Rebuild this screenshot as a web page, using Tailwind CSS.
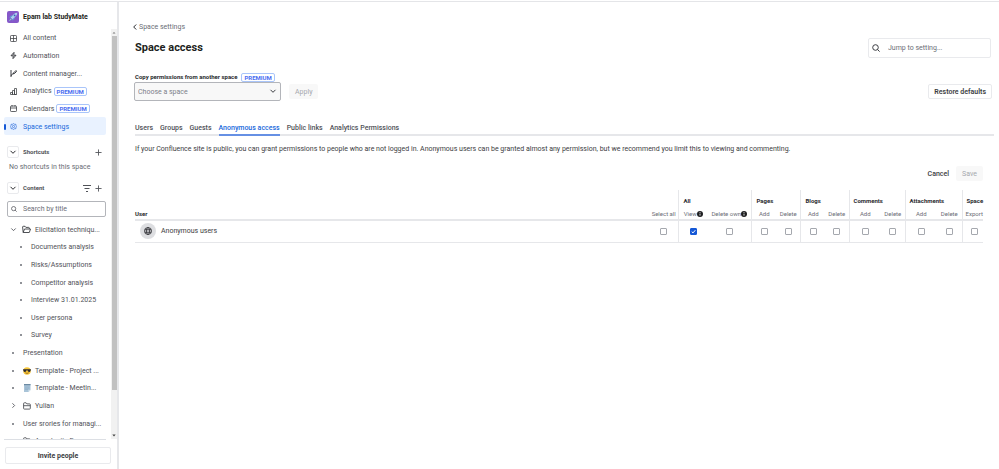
<!DOCTYPE html>
<html lang="en">
<head>
<meta charset="utf-8">
<meta name="viewport" content="width=device-width, initial-scale=1">
<title>Space access</title>
<script src="https://cdn.jsdelivr.net/npm/@tailwindcss/browser@4"></script>
</head>
<body class="flex h-screen flex-col overflow-hidden bg-white font-[Roboto,'Open_Sans',sans-serif] text-[7px] leading-[10px] text-[#505258]">
<svg class="hidden" aria-hidden="true">
  <symbol id="down" viewBox="0 0 8 8"><path d="M1.5 2.8 4 5.3l2.5-2.5" fill="none" stroke="currentColor" stroke-width="1"/></symbol>
  <symbol id="right" viewBox="0 0 8 8"><path d="M2.8 1.5 5.3 4 2.8 6.5" fill="none" stroke="currentColor" stroke-width="1"/></symbol>
  <symbol id="plus" viewBox="0 0 8 8"><path d="M4 .5v7M.5 4h7" fill="none" stroke="currentColor" stroke-width="1"/></symbol>
  <symbol id="lens" viewBox="0 0 8 8"><circle cx="3.5" cy="3.5" r="2.8" fill="none" stroke="currentColor"/><path d="m5.4 5.4 2.2 2.2" stroke="currentColor"/></symbol>
  <symbol id="folder" viewBox="0 0 8 8"><path d="M.6 6.3V1.5q0-.7.7-.7h1.800l.8 1.100h2.700q.7 0 .7.7v3.700q0 .8-.7.8H1.300q-.7 0-.7-.8ZM.6 3.700h6.700" fill="none" stroke="currentColor" stroke-width=".9"/></symbol>
  <symbol id="info" viewBox="0 0 8 8"><circle cx="4" cy="4" r="4" fill="#1e1f21"/><path d="M4 3.500v2.700M4 1.500v1.200" stroke="#fff" stroke-width="1.100"/></symbol>
</svg>
<div class="h-px shrink-0"></div>
<div class="h-px shrink-0 bg-[#e4e5e8]"></div>
<div class="flex min-h-0 flex-1">
  <aside class="flex w-[119px] shrink-0 flex-col border-r-2 border-[#e6e7ea]">
    <header class="flex h-[27px] shrink-0 items-center gap-1 pt-[2px] pl-[7px]">
      <svg class="size-3" viewBox="0 0 12 12"><rect width="12" height="12" rx="2" fill="#8558c9"/><path d="M3.600 6.400 7 3q1.400-1.300 3.300-1.300Q10.200 3.700 9 5L5.600 8.400Z" fill="#a9d3ee"/><path d="M3.600 6.400 2.200 6.600 4.600 4.500l1 .1ZM5.600 8.400l-.2 1.400L7.500 7.400l-.1-1Z" fill="#4fb6d6"/><circle cx="7.600" cy="4.400" r=".9" fill="#3b5fb5"/><path d="M3.600 7.400 1.800 10.200l2.800-1.800Z" fill="#7ee0c3"/></svg>
      <span class="text-[7px] font-bold text-[#1e1f21] whitespace-nowrap">Epam lab StudyMate</span>
    </header>
    <div class="flex min-h-0 flex-1">
      <div class="flex min-w-0 flex-1 flex-col overflow-hidden pr-[5px] pl-1">
        <nav class="grid h-[106px] shrink-0 auto-rows-fr" aria-label="Space">
          <a href="#" class="flex items-center gap-[6px] pt-px pl-[6px]"><svg class="size-[7px]" viewBox="0 0 14 14" fill="none" stroke="#3b3d42" stroke-width="1.500"><rect x="1" y="1" width="12" height="12" rx="1.500"/><path d="M7 1v12M1 7h12"/></svg>All content</a>
          <a href="#" class="flex items-center gap-[6px] pt-px pl-[6px]"><svg class="size-[7px]" viewBox="0 0 14 14" fill="none" stroke="#3b3d42" stroke-width="2"><path d="M8 .8 2 7.500h4.500L6 13.200l6-6.700H7.500Z"/></svg>Automation</a>
          <a href="#" class="flex items-center gap-[6px] pt-px pl-[6px]"><svg class="size-[7px]" viewBox="0 0 14 14" fill="none" stroke="#3b3d42" stroke-width="2"><path d="M2 0v14M2 12q2-5 6-6M7 8l1-3 4-4 1.500 1.500-4 4Z"/></svg>Content manager...</a>
          <a href="#" class="flex items-center gap-[6px] pt-px pl-[6px]"><svg class="size-[7px]" viewBox="0 0 14 14" fill="none" stroke="#3b3d42" stroke-width="1.500"><path d="M1 13V9h4v4M5 13V5h4v8M9 13V1h4v12ZM1 13h12"/></svg><span>Analytics</span><span class="-ml-1 rounded-[2px] border border-[#a9c5fa] px-[2px] text-[6px] leading-[7px] font-bold text-[#4a6df0]">PREMIUM</span></a>
          <a href="#" class="flex items-center gap-[6px] pt-px pl-[6px]"><svg class="size-[7px]" viewBox="0 0 14 14" fill="none" stroke="#3b3d42" stroke-width="1.600"><rect x="1" y="2" width="12" height="11" rx="1.500"/><path d="M1 6h12M4 0v3M10 0v3"/></svg><span>Calendars</span><span class="-ml-1 rounded-[2px] border border-[#a9c5fa] px-[2px] text-[6px] leading-[7px] font-bold text-[#4a6df0]">PREMIUM</span></a>
          <a href="#" aria-current="page" class="relative flex items-center gap-[6px] rounded-[2px] bg-[#e9f2ff] pt-px pl-[6px] text-[#1868db]"><span class="absolute left-0 h-[6px] w-[2px] rounded-[1px] bg-[#1558d6]"></span><svg class="size-[7px]" viewBox="0 0 14 14" fill="none" stroke="#2f6fdc" stroke-width="1.500"><path d="m7 .8 2 1.700 2.700.1.400 2.600 1.300 1.800-1.300 1.800-.4 2.600-2.700.1-2 1.700-2-1.700-2.700-.1-.4-2.600L.6 7l1.300-1.800.4-2.600L5 2.500Z"/><circle cx="7" cy="7" r="2.200"/></svg>Space settings</a>
        </nav>
        <div class="mt-[11px] flex h-3 shrink-0 items-center pl-[3px]">
          <button aria-label="Collapse shortcuts" class="grid size-3 place-items-center rounded-[2px] border border-[#e9eaed] text-[#292a2e]"><svg class="size-2"><use href="#down"/></svg></button>
          <h2 class="ml-1 flex-1 text-[6px] font-bold">Shortcuts</h2>
          <button aria-label="Add shortcut" class="mr-1"><svg class="size-[7px]"><use href="#plus"/></svg></button>
        </div>
        <p class="mt-1 shrink-0 pl-[5px] text-[#6b6e76]">No shortcuts in this space</p>
        <div class="mt-[10px] flex h-3 shrink-0 items-center pl-[3px]">
          <button aria-label="Collapse content" class="grid size-3 place-items-center rounded-[2px] border border-[#e9eaed] text-[#292a2e]"><svg class="size-2"><use href="#down"/></svg></button>
          <h2 class="ml-1 flex-1 text-[6px] font-bold">Content</h2>
          <button aria-label="Filter" class="mr-1"><svg class="h-[7px] w-2" viewBox="0 0 8 7" stroke="currentColor"><path d="M0 .5h8M1.500 3.500h5M3 6.500h2"/></svg></button>
          <button aria-label="Add content" class="mr-1"><svg class="size-[7px]"><use href="#plus"/></svg></button>
        </div>
        <label class="mt-[7px] ml-[3px] flex h-4 shrink-0 items-center gap-[5px] rounded-[2px] border border-[#b3b5ba] pl-[3px]"><svg class="size-[6px] shrink-0"><use href="#lens"/></svg><input aria-label="Search by title" placeholder="Search by title" class="w-full min-w-0 pl-px placeholder:text-[#6b6e76]"></label>
        <ul class="mt-1 grid h-[229px] shrink-0 auto-rows-fr whitespace-nowrap">
          <li class="flex items-center gap-[5px] pl-[6px]"><svg class="size-[7px]"><use href="#down"/></svg><svg class="-mr-px size-[9px]" viewBox="0 0 9 8" fill="none" stroke="#3b3d42" stroke-width=".9"><path d="M1.200 7 .6 1.500q0-.7.7-.7h1.800l.8 1.100h2.700q.7 0 .7.7v.9M1.200 7l1.300-3.500h6L7.300 7Z"/></svg><a href="#">Elicitation techniqu...</a></li>
          <li class="flex items-center gap-2 pl-4"><i class="size-[2px] rounded-[1px] bg-[#6b6e76]"></i><a href="#" class="pl-px">Documents analysis</a></li>
          <li class="flex items-center gap-2 pl-4"><i class="size-[2px] rounded-[1px] bg-[#6b6e76]"></i><a href="#" class="pl-px">Risks/Assumptions</a></li>
          <li class="flex items-center gap-2 pl-4"><i class="size-[2px] rounded-[1px] bg-[#6b6e76]"></i><a href="#" class="pl-px">Competitor analysis</a></li>
          <li class="flex items-center gap-2 pl-4"><i class="size-[2px] rounded-[1px] bg-[#6b6e76]"></i><a href="#" class="pl-px">Interview 31.01.2025</a></li>
          <li class="flex items-center gap-2 pl-4"><i class="size-[2px] rounded-[1px] bg-[#6b6e76]"></i><a href="#" class="pl-px">User persona</a></li>
          <li class="flex items-center gap-2 pl-4"><i class="size-[2px] rounded-[1px] bg-[#6b6e76]"></i><a href="#" class="pl-px">Survey</a></li>
          <li class="flex items-center gap-2 pl-2"><i class="size-[2px] rounded-[1px] bg-[#6b6e76]"></i><a href="#" class="pl-px">Presentation</a></li>
          <li class="flex items-center gap-2 pl-2"><i class="size-[2px] rounded-[1px] bg-[#6b6e76]"></i><svg class="-mr-1 ml-px size-2" viewBox="0 0 16 16"><circle cx="8" cy="8" r="7.500" fill="#f8c73a"/><path d="M0 4.500h16l-.8 3q-.7 2.500-3 2.500-2.600 0-3.400-3.500H7.200Q6.400 10 3.800 10 1.500 10 .8 7.500Z" fill="#2b2b33"/><path d="M4.500 11.500q3.500 2.800 7 0" fill="none" stroke="#7a4a12" stroke-width="1.300"/></svg><a href="#">Template - Project ...</a></li>
          <li class="flex items-center gap-2 pl-2"><i class="size-[2px] rounded-[1px] bg-[#6b6e76]"></i><svg class="-mr-1 ml-px size-2" viewBox="0 0 16 16"><path d="M2 0h13v12l-4 4H2Z" fill="#a9c4d8"/><path d="M2 0h13v2.500H2Z" fill="#6c8aa3"/><path d="M4 6h9M4 8.500h9M4 11h6" stroke="#84a5c0"/><path d="M11 16v-4h4Z" fill="#d8e5ee"/></svg><a href="#">Template - Meetin...</a></li>
          <li class="flex items-center gap-[5px] pl-[6px]"><svg class="size-[7px]"><use href="#right"/></svg><svg class="-mr-px ml-px size-2"><use href="#folder"/></svg><a href="#">Yulian</a></li>
          <li class="flex items-center gap-2 pl-2"><i class="size-[2px] rounded-[1px] bg-[#6b6e76]"></i><a href="#" class="pl-px">User srories for managi...</a></li>
          <li class="flex items-center gap-[5px] pl-[6px]"><svg class="size-[7px]"><use href="#right"/></svg><svg class="-mr-px ml-px size-2"><use href="#folder"/></svg><a href="#">Anastasiia E...</a></li>
        </ul>
      </div>
      <div class="flex w-[6px] shrink-0 flex-col items-center bg-[#f1f1f1]" aria-hidden="true">
        <svg class="h-[7px] w-[6px] shrink-0" viewBox="0 0 6 7"><path d="M1.500 4.500 3 3l1.500 1.500Z" fill="#777"/></svg>
        <div class="w-[5px] flex-[355] bg-[#c1c1c1]"></div>
        <div class="flex-[42]"></div>
        <svg class="h-[7px] w-[6px] shrink-0" viewBox="0 0 6 7"><path d="M1.300 2.500 3 4.500l1.700-2Z" fill="#444"/></svg>
      </div>
    </div>
    <footer class="mx-1 shrink-0 pb-[5px]">
      <div class="mr-[7px] h-px bg-[#dcdfe4]"></div>
      <button class="mt-[7px] ml-px h-[17px] w-[106px] rounded-[2px] border border-[#e9eaed] text-[7px] font-bold text-[#3b3d42]">Invite people</button>
    </footer>
  </aside>

  <main class="min-w-0 flex-1 pr-[5px] pl-4 text-[#3b3d42]">
    <a href="#" class="mt-5 -ml-1 flex items-center text-[#6b6e76]"><svg class="size-2 -scale-x-100 text-[#292a2e]"><use href="#right"/></svg>Space settings</a>
    <div class="mt-[6px] flex h-5 items-center justify-between pr-[3px]">
      <h1 class="text-[11px] font-bold text-[#1e1f21]">Space access</h1>
      <label class="flex h-5 w-[123px] items-center gap-2 rounded-[2px] border border-[#e9eaed] pl-[3px]"><svg class="size-2 shrink-0"><use href="#lens"/></svg><input aria-label="Jump to setting" placeholder="Jump to setting..." class="w-full min-w-0 placeholder:text-[#6b6e76]"></label>
    </div>
    <div class="mt-[14px] flex h-[10px] items-center gap-1"><label for="space" class="text-[6px] font-bold text-[#292a2e]">Copy permissions from another space</label><span class="rounded-[2px] border border-[#a9c5fa] px-[2px] text-[6px] leading-[7px] font-bold text-[#4a6df0]">PREMIUM</span></div>
    <div class="flex h-[19px] items-center gap-2">
      <div class="relative -ml-px h-full w-[147px]"><select id="space" class="size-full appearance-none rounded-[2px] border border-[#b3b5ba] bg-[#f8f8f8] pl-[3px] text-[#7d818a]"><option>Choose a space</option></select><svg class="pointer-events-none absolute top-[5px] right-1 size-2"><use href="#down"/></svg></div>
      <button disabled class="h-[15px] rounded-[2px] bg-[#f8f8f8] px-[6px] text-[#a5a8ae]">Apply</button>
      <button class="mr-[2px] ml-auto h-[15px] rounded-[2px] border border-[#e9eaed] px-[5px] font-semibold">Restore defaults</button>
    </div>
    <nav class="mt-[22px] flex gap-[7px] border-b-2 border-[#e6e7ea] font-medium text-[#505258]" aria-label="Permissions">
      <a href="#" class="pb-px">Users</a><a href="#">Groups</a><a href="#">Guests</a><a href="#" aria-current="page" class="-mb-[2px] border-b-2 border-[#6690e4] text-[#1868db]">Anonymous access</a><a href="#">Public links</a><a href="#">Analytics Permissions</a>
    </nav>
    <p class="mt-2">If your Confluence site is public, you can grant permissions to people who are not logged in. Anonymous users can be granted almost any permission, but we recommend you limit this to viewing and commenting.</p>
    <div class="mt-3 flex h-[15px] items-center justify-end gap-[7px] pr-[11px] font-medium"><button>Cancel</button><button disabled class="h-full rounded-[2px] bg-[#f8f8f8] px-[6px] font-normal text-[#a5a8ae]">Save</button></div>
    <div class="mt-[9px] pr-[11px]">
      <table class="w-full table-fixed border-collapse whitespace-nowrap">
        <colgroup><col><col class="w-[30px]"><col class="w-[28px]"><col class="w-[45px]"><col class="w-[24px]"><col class="w-[25px]"><col class="w-[24px]"><col class="w-[24px]"><col class="w-[32px]"><col class="w-[24px]"><col class="w-[32px]"><col class="w-[25px]"><col class="w-[21px]"></colgroup>
        <thead>
          <tr class="h-[18px] text-left text-[6px] font-bold text-[#292a2e] [&>th]:pt-1">
            <th></th><th></th><th colspan="2" class="border-l border-[#e6e7ea] pl-1">All</th><th colspan="2" class="border-l border-[#e6e7ea] pl-1">Pages</th><th colspan="2" class="border-l border-[#e6e7ea] pl-1">Blogs</th><th colspan="2" class="border-l border-[#e6e7ea] pl-1">Comments</th><th colspan="2" class="border-l border-[#e6e7ea] pl-1">Attachments</th><th class="border-l border-[#e6e7ea] pl-1">Space</th>
          </tr>
          <tr class="h-3 border-b-2 border-[#e6e7ea] text-[6px] text-[#6b6e76] [&>th]:font-normal">
            <th class="text-left"><b class="text-[#292a2e]">User</b></th><th>Select all</th>
            <th class="border-l border-[#e6e7ea]"><span class="flex items-center justify-center">View<svg class="size-[6px]"><use href="#info"/></svg></span></th>
            <th><span class="flex items-center justify-center">Delete own<svg class="size-[6px]"><use href="#info"/></svg></span></th>
            <th class="border-l border-[#e6e7ea]">Add</th><th>Delete</th><th class="border-l border-[#e6e7ea]">Add</th><th>Delete</th><th class="border-l border-[#e6e7ea]">Add</th><th>Delete</th><th class="border-l border-[#e6e7ea]">Add</th><th>Delete</th><th class="border-l border-[#e6e7ea] pl-[3px]">Export</th>
          </tr>
        </thead>
        <tbody>
          <tr class="h-[22px] border-b border-[#e6e7ea] [&_input]:mx-auto [&_input]:block [&_input]:size-[7px] [&_input]:appearance-none [&_input]:rounded-[1px] [&_input]:border [&_input]:border-[#a5a8ae]">
            <td><div class="flex items-center gap-[5px] pl-[5px]"><span class="grid size-4 place-items-center rounded-full bg-[#dddee1]"><svg class="size-[8px]" viewBox="0 0 16 16" fill="none" stroke="#292a2e" stroke-width="1.600"><circle cx="8" cy="8" r="7"/><ellipse cx="8" cy="8" rx="3" ry="7"/><path d="M1.500 5.500h13M1.500 10.500h13"/></svg></span>Anonymous users</div></td>
            <td><input type="checkbox" aria-label="Select all"></td>
            <td class="border-l border-[#e6e7ea]"><div class="relative mx-auto size-[7px]"><input type="checkbox" checked aria-label="All: view" class="checked:border-[#1558d6]! checked:bg-[#1558d6]"><svg class="pointer-events-none absolute inset-0 size-[7px]" viewBox="0 0 7 7"><path d="m1.700 3.600 1.300 1.300 2.300-2.700" fill="none" stroke="#fff"/></svg></div></td>
            <td><input type="checkbox" aria-label="All: delete own"></td>
            <td class="border-l border-[#e6e7ea]"><input type="checkbox" aria-label="Pages: add"></td><td><input type="checkbox" aria-label="Pages: delete"></td>
            <td class="border-l border-[#e6e7ea]"><input type="checkbox" aria-label="Blogs: add"></td><td><input type="checkbox" aria-label="Blogs: delete"></td>
            <td class="border-l border-[#e6e7ea]"><input type="checkbox" aria-label="Comments: add"></td><td><input type="checkbox" aria-label="Comments: delete"></td>
            <td class="border-l border-[#e6e7ea]"><input type="checkbox" aria-label="Attachments: add"></td><td><input type="checkbox" aria-label="Attachments: delete"></td>
            <td class="border-l border-[#e6e7ea] pl-1"><input type="checkbox" aria-label="Space: export"></td>
          </tr>
        </tbody>
      </table>
    </div>
  </main>
</div>
</body>
</html>
